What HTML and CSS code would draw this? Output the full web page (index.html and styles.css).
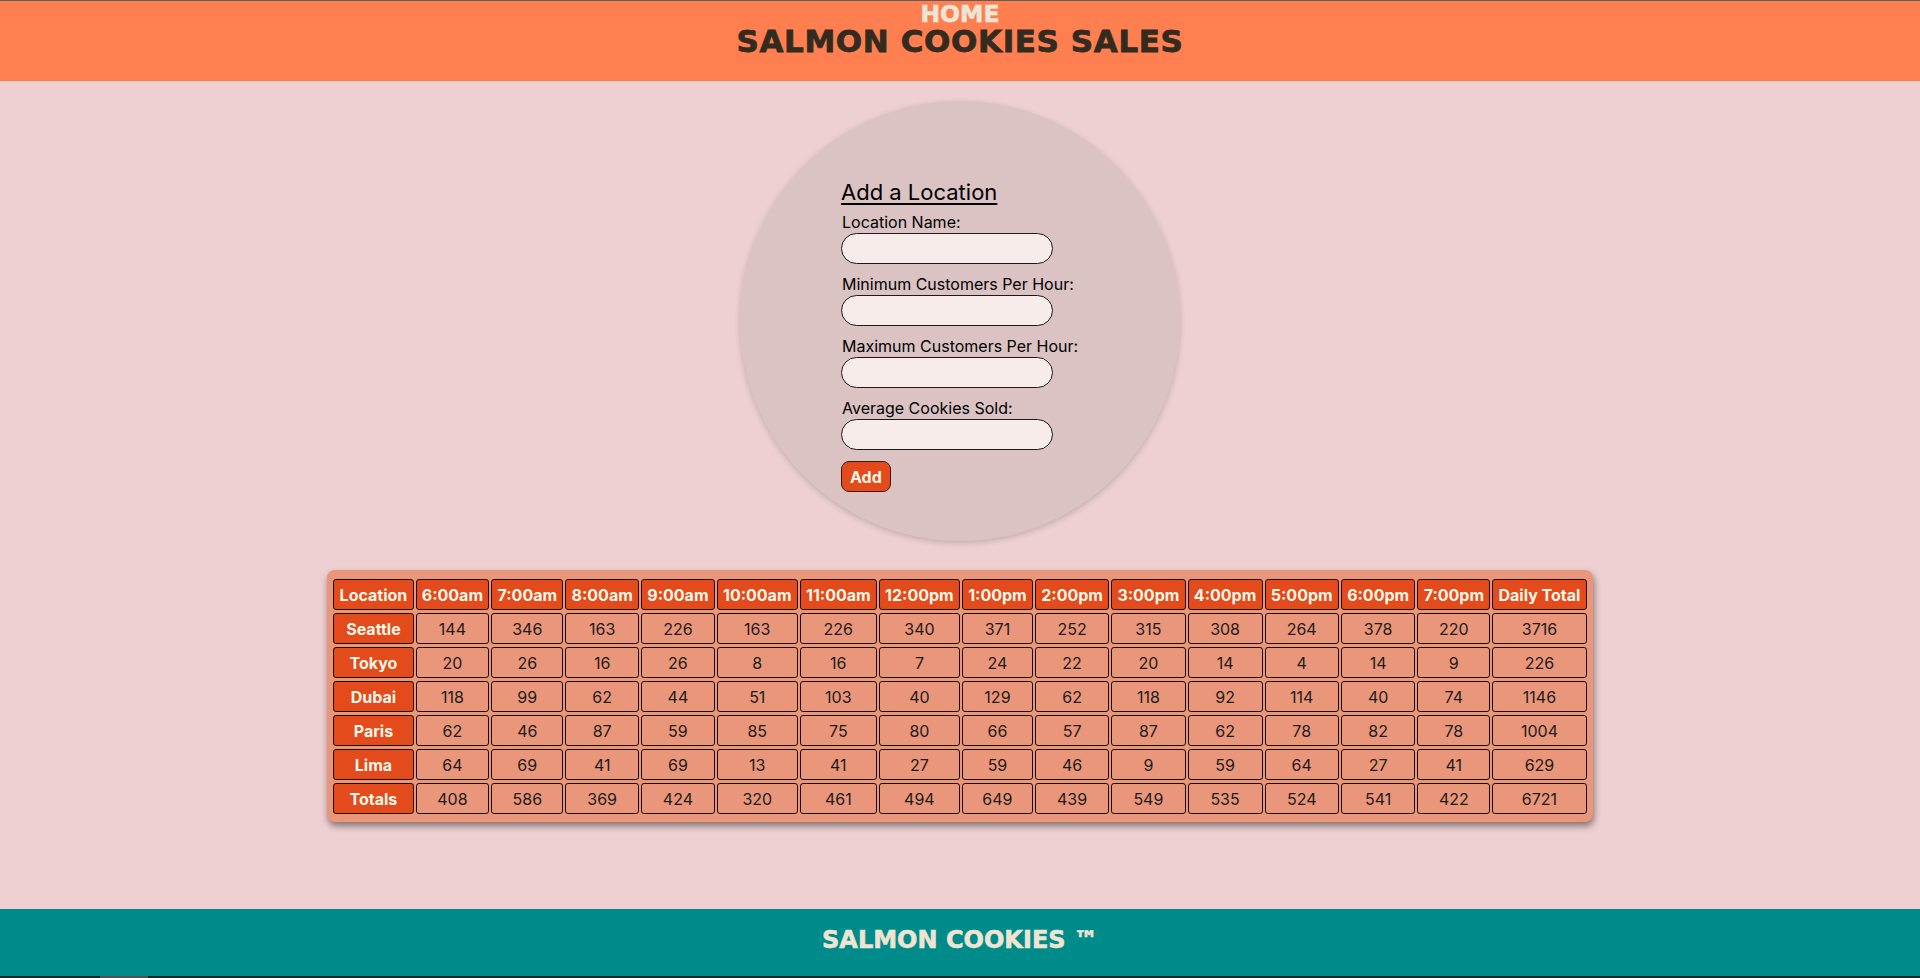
FILE: index.html
```html
<!DOCTYPE html>
<html lang="en">
<head>
<meta charset="utf-8">
<title>Salmon Cookies Sales</title>
<link rel="stylesheet" href="styles.css">
</head>
<body>
<header class="site-header">
  <a class="home-link" href="#">HOME</a>
  <h1 class="site-title">SALMON COOKIES SALES</h1>
</header>
<main class="main">
  <div class="circle">
    <form class="loc-form">
      <h2 class="form-title">Add a Location</h2>
      <label class="field-label" for="name">Location Name:</label>
      <input class="field-input" id="name" type="text">
      <label class="field-label" for="min">Minimum Customers Per Hour:</label>
      <input class="field-input" id="min" type="text">
      <label class="field-label" for="max">Maximum Customers Per Hour:</label>
      <input class="field-input" id="max" type="text">
      <label class="field-label" for="avg">Average Cookies Sold:</label>
      <input class="field-input" id="avg" type="text">
      <button class="add-btn" type="button">Add</button>
    </form>
  </div>
  <div class="table-wrap">
    <table class="sales">
      <thead>
        <tr>
          <th>Location</th><th>6:00am</th><th>7:00am</th><th>8:00am</th><th>9:00am</th><th>10:00am</th><th>11:00am</th><th>12:00pm</th><th>1:00pm</th><th>2:00pm</th><th>3:00pm</th><th>4:00pm</th><th>5:00pm</th><th>6:00pm</th><th>7:00pm</th><th>Daily Total</th>
        </tr>
      </thead>
      <tbody>
        <tr><th>Seattle</th><td>144</td><td>346</td><td>163</td><td>226</td><td>163</td><td>226</td><td>340</td><td>371</td><td>252</td><td>315</td><td>308</td><td>264</td><td>378</td><td>220</td><td>3716</td></tr>
        <tr><th>Tokyo</th><td>20</td><td>26</td><td>16</td><td>26</td><td>8</td><td>16</td><td>7</td><td>24</td><td>22</td><td>20</td><td>14</td><td>4</td><td>14</td><td>9</td><td>226</td></tr>
        <tr><th>Dubai</th><td>118</td><td>99</td><td>62</td><td>44</td><td>51</td><td>103</td><td>40</td><td>129</td><td>62</td><td>118</td><td>92</td><td>114</td><td>40</td><td>74</td><td>1146</td></tr>
        <tr><th>Paris</th><td>62</td><td>46</td><td>87</td><td>59</td><td>85</td><td>75</td><td>80</td><td>66</td><td>57</td><td>87</td><td>62</td><td>78</td><td>82</td><td>78</td><td>1004</td></tr>
        <tr><th>Lima</th><td>64</td><td>69</td><td>41</td><td>69</td><td>13</td><td>41</td><td>27</td><td>59</td><td>46</td><td>9</td><td>59</td><td>64</td><td>27</td><td>41</td><td>629</td></tr>
      </tbody>
      <tfoot>
        <tr><th>Totals</th><td>408</td><td>586</td><td>369</td><td>424</td><td>320</td><td>461</td><td>494</td><td>649</td><td>439</td><td>549</td><td>535</td><td>524</td><td>541</td><td>422</td><td>6721</td></tr>
      </tfoot>
    </table>
  </div>
</main>
<footer class="site-footer">
  <p class="footer-text">SALMON COOKIES &trade;</p>
  <div class="bottom-strip"><span class="strip-thumb"></span></div>
</footer>
</body>
</html>
```

FILE: styles.css
```css
html, body {
  margin: 0;
  padding: 0;
}
body {
  background: #eed0d2;
  font-family: "Inter", "Liberation Sans", sans-serif;
  color: #000;
}
.site-header {
  background: #ff7f50;
  border-top: 1px solid #5e5e5e;
  display: flex;
  flex-direction: column;
  align-items: center;
  padding-bottom: 25px;
}
.home-link {
  font-family: "DejaVu Sans", sans-serif;
  font-weight: bold;
  font-size: 23.5px;
  line-height: 26px;
  color: #efe5d6;
  text-decoration: none;
  -webkit-text-stroke: 0.6px #efe5d6;
}
.site-title {
  margin: 0;
  font-family: "DejaVu Sans", sans-serif;
  font-weight: bold;
  font-size: 31px;
  line-height: 29px;
  letter-spacing: 0.6px;
  color: #332b1f;
  -webkit-text-stroke: 0.8px #332b1f;
}
.main {
  display: flex;
  flex-direction: column;
  align-items: center;
  padding-top: 20px;
  padding-bottom: 87px;
}
.circle {
  width: 440px;
  height: 440px;
  border-radius: 50%;
  background: #dbc3c4;
  box-shadow: 0 2px 6px rgba(0, 0, 0, 0.18);
  box-sizing: border-box;
  padding: 78px 0 0 101px;
}
.loc-form {
  display: flex;
  flex-direction: column;
  align-items: flex-start;
}
.form-title {
  margin: 0 0 8px 0;
  font-size: 22px;
  font-weight: normal;
  line-height: normal;
  text-decoration: underline;
  text-underline-offset: 3px;
  text-decoration-thickness: 1.5px;
}
.field-label {
  font-size: 16px;
  line-height: 19px;
  margin-bottom: 1px;
  padding-left: 1px;
}
.field-input {
  box-sizing: border-box;
  width: 212px;
  height: 31px;
  margin: 0 0 11px 0;
  border: 1px solid #1a1a1a;
  border-radius: 16px;
  background: #f7ece9;
  font-family: inherit;
  font-size: 15px;
  padding: 0 10px;
}
.add-btn {
  box-sizing: border-box;
  height: 31px;
  padding: 0 8px;
  border: 1px solid #3a1a10;
  border-radius: 8px;
  background: #e34a1c;
  color: #fff8e8;
  font-family: inherit;
  font-weight: bold;
  font-size: 16px;
}
.table-wrap {
  margin-top: 29px;
  background: #e9967a;
  border-radius: 8px;
  padding: 6px 4px 5px 4px;
  box-shadow: 1px 4px 7px rgba(0, 0, 0, 0.45);
}
.sales {
  border-collapse: separate;
  border-spacing: 2.5px 3px;
  font-size: 16px;
}
.sales th,
.sales td {
  border: 1px solid #1a0d08;
  border-radius: 3px;
  height: 31px;
  box-sizing: border-box;
  padding: 0 5.25px;
  text-align: center;
  white-space: nowrap;
}
.sales th {
  background: #e34a1c;
  color: #fff8e8;
  font-weight: bold;
}
.sales td {
  background: #e9967a;
  color: #1f1a18;
  font-weight: normal;
}
.site-footer {
  background: #008b8b;
  display: flex;
  flex-direction: column;
}
.footer-text {
  margin: 0;
  height: 67px;
  box-sizing: border-box;
  padding-bottom: 5px;
  display: flex;
  align-items: center;
  justify-content: center;
  font-family: "DejaVu Sans", sans-serif;
  font-weight: bold;
  font-size: 24px;
  color: #eee4d2;
  -webkit-text-stroke: 0.6px #eee4d2;
}
.bottom-strip {
  height: 3px;
  background: #1c2828;
  position: relative;
}
.strip-thumb {
  position: absolute;
  left: 100px;
  top: 0;
  width: 48px;
  height: 3px;
  background: #505050;
}
```
